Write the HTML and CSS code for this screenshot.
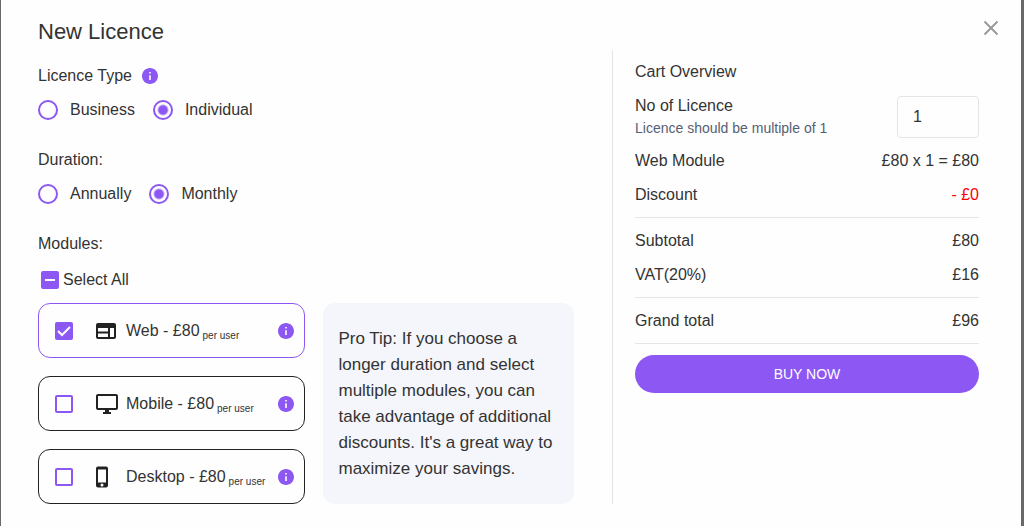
FILE: index.html
```
<!DOCTYPE html>
<html lang="en">
<head>
    <meta charset="UTF-8">
    <meta name="viewport" content="width=device-width, initial-scale=1.0">
    <title>New Licence</title>
    <link rel="stylesheet" href="styles.css">
</head>
<body>
    <svg class="sprite" aria-hidden="true">
        <symbol id="icon-info" viewBox="2 2 20 20">
            <path d="M12 2C6.480 2 2 6.480 2 12s4.480 10 10 10 10-4.480 10-10S17.520 2 12 2zm1 15h-2v-6h2v6zm0-8h-2V7h2v2z"/>
        </symbol>
    </svg>
    <form class="modal">
        <header class="modal-header">
            <h1>New Licence</h1>
            <button type="button" class="close" aria-label="Close">
                <svg viewBox="0 0 16 16"><path d="M1.500 1.500l13 13M14.500 1.500l-13 13" fill="none" stroke="currentColor" stroke-width="2"/></svg>
            </button>
        </header>
        <div class="modal-body">
            <main class="options">
                <div class="group" role="radiogroup" aria-labelledby="typeLabel">
                    <div class="group-title">
                        <span id="typeLabel">Licence Type</span>
                        <button type="button" class="info" aria-label="About licence types"><svg><use href="#icon-info"/></svg></button>
                    </div>
                    <div class="radios">
                        <label><input type="radio" name="type" value="business">Business</label>
                        <label><input type="radio" name="type" value="individual" checked>Individual</label>
                    </div>
                </div>
                <div class="group" role="radiogroup" aria-labelledby="durationLabel">
                    <div class="group-title" id="durationLabel">Duration:</div>
                    <div class="radios">
                        <label><input type="radio" name="duration" value="annually">Annually</label>
                        <label><input type="radio" name="duration" value="monthly" checked>Monthly</label>
                    </div>
                </div>
                <div class="group-title">Modules:</div>
                <label class="select-all"><input type="checkbox" id="selectAll" class="partial">Select All</label>
                <div class="modules">
                    <div class="module-list">
                        <div class="module selected">
                            <input type="checkbox" id="web" checked>
                            <label for="web">
                                <svg viewBox="0 0 24 24"><path fill-rule="evenodd" d="M4 4h16a2 2 0 0 1 2 2v12a2 2 0 0 1-2 2H4a2 2 0 0 1-2-2V6a2 2 0 0 1 2-2zM4 9v3.500h10V9zM4 14.500V18h10v-3.500zM16 9v9h4V9z"/></svg>
                                <span>Web - £80<small>per user</small></span>
                            </label>
                            <button type="button" class="info" aria-label="About Web"><svg><use href="#icon-info"/></svg></button>
                        </div>
                        <div class="module">
                            <input type="checkbox" id="mobile">
                            <label for="mobile">
                                <svg viewBox="-1 0 24 24"><path d="M21 2H3c-1.100 0-2 .9-2 2v12c0 1.100.9 2 2 2h7v2H8v2h8v-2h-2v-2h7c1.100 0 2-.9 2-2V4c0-1.100-.9-2-2-2zm0 14H3V4h18v12z"/></svg>
                                <span>Mobile - £80<small>per user</small></span>
                            </label>
                            <button type="button" class="info" aria-label="About Mobile"><svg><use href="#icon-info"/></svg></button>
                        </div>
                        <div class="module">
                            <input type="checkbox" id="desktop">
                            <label for="desktop">
                                <svg viewBox="0 0 24 24"><path fill-rule="evenodd" d="M4 1.500h8a2 2 0 0 1 2 2v17a2 2 0 0 1-2 2H4a2 2 0 0 1-2-2v-17a2 2 0 0 1 2-2zM4 4.500v13h8v-13zM8 18.500a1.500 1.500 0 1 0 0 3 1.500 1.500 0 0 0 0-3z"/></svg>
                                <span>Desktop - £80<small>per user</small></span>
                            </label>
                            <button type="button" class="info" aria-label="About Desktop"><svg><use href="#icon-info"/></svg></button>
                        </div>
                    </div>
                    <p class="tip">Pro Tip: If you choose a longer duration and select multiple modules, you can take advantage of additional discounts. It's a great way to maximize your savings.</p>
                </div>
            </main>
            <aside class="cart">
                <section class="cart-section">
                    <h2>Cart Overview</h2>
                    <div class="row">
                        <div>
                            <label for="quantity">No of Licence</label>
                            <div class="hint" id="quantityHint">Licence should be multiple of 1</div>
                        </div>
                        <input type="text" id="quantity" inputmode="numeric" value="1" aria-describedby="quantityHint">
                    </div>
                    <div class="row"><span>Web Module</span><span>£80 x 1 = £80</span></div>
                    <div class="row"><span>Discount</span><span class="discount">- £0</span></div>
                </section>
                <section class="cart-section">
                    <div class="row"><span>Subtotal</span><span>£80</span></div>
                    <div class="row"><span>VAT(20%)</span><span>£16</span></div>
                </section>
                <section class="cart-section">
                    <div class="row"><span>Grand total</span><span>£96</span></div>
                </section>
                <button type="submit" class="buy">BUY NOW</button>
            </aside>
        </div>
    </form>
    <script>
        document.getElementById('selectAll').indeterminate = true;
    </script>
</body>
</html>
```
FILE: styles.css
```
* {
    box-sizing: border-box;
}
body {
    margin: 0;
    padding: 0 3px 0 1px;
    background-color: #68696c;
    color: #333;
    font-family: "Liberation Sans", Arial, sans-serif;
    font-size: 16px;
    line-height: 24px;
}
.sprite {
    position: absolute;
    width: 0;
    height: 0;
}
.modal {
    min-height: 100vh;
    background-color: #fefefe;
}
.modal-header {
    display: flex;
    justify-content: space-between;
    align-items: flex-start;
    padding: 20px 22px 6px 37px;
}
h1 {
    margin: 0;
    font-size: 22px;
    font-weight: normal;
}
h2 {
    margin: 0;
    font-size: 16px;
    font-weight: normal;
}
button {
    padding: 0;
    border: none;
    background: none;
    font-family: inherit;
    cursor: pointer;
}
.close {
    width: 16px;
    height: 16px;
    color: #999;
}
.close svg,
.info svg {
    display: block;
    width: 16px;
    height: 16px;
}
.info svg {
    fill: #8c57f3;
}
.modal-body {
    display: grid;
    grid-template-columns: 574fr 367fr;
    padding: 0 42px 21px 37px;
}
.options {
    padding: 14px 38px 0 0;
}
.group {
    margin-bottom: 28px;
}
.group-title {
    display: flex;
    align-items: center;
    gap: 10px;
    margin-bottom: 12px;
}
.radios {
    display: flex;
    gap: 18px;
}
.radios label {
    display: flex;
    align-items: center;
    gap: 12px;
    line-height: 20px;
}
input[type="radio"],
input[type="checkbox"] {
    flex: none;
    appearance: none;
    margin: 0;
    border: 2px solid #8c57f3;
}
input[type="radio"] {
    width: 20px;
    height: 20px;
    border-radius: 50%;
}
input[type="radio"]:checked {
    background: radial-gradient(circle, #8c57f3 4px, transparent 6px);
}
input[type="checkbox"] {
    width: 18px;
    height: 18px;
    border-radius: 2px;
}
input[type="checkbox"]:checked {
    background: #8c57f3 url("data:image/svg+xml,%3Csvg xmlns='http://www.w3.org/2000/svg' viewBox='0 0 14 14'%3E%3Cpath d='M1 7l4 4 8-8' fill='none' stroke='white' stroke-width='2'/%3E%3C/svg%3E") center / 14px no-repeat;
}
.partial {
    background: linear-gradient(white, white) center / 10px 2px no-repeat #8c57f3;
}
.select-all {
    display: flex;
    align-items: center;
    gap: 4px;
    margin-bottom: 11px;
    padding-left: 3px;
}
.modules {
    display: grid;
    grid-template-columns: 268fr 251fr;
    gap: 18px;
}
.module-list {
    display: flex;
    flex-direction: column;
    gap: 18px;
}
.module {
    display: flex;
    align-items: center;
    min-height: 55px;
    padding: 0 10px 0 16px;
    border: 1px solid #222;
    border-radius: 12px;
}
.module.selected {
    border-color: #8c57f3;
}
.module label {
    flex: 1;
    display: flex;
    align-items: center;
    gap: 8px;
    margin-left: 21px;
}
.module label svg {
    flex: none;
    width: 24px;
    height: 24px;
    fill: #222;
}
.module small {
    position: relative;
    top: 3px;
    margin-left: 3px;
    font-size: 10px;
    line-height: 12px;
}
.tip {
    display: flex;
    align-items: center;
    margin: 0;
    padding: 12px 8px 12px 15px;
    border-radius: 12px;
    background-color: #f5f6fb;
    font-size: 17px;
    line-height: 26px;
}
.cart {
    padding: 0 0 0 22px;
    border-left: 1px solid #e5e5e5;
}
.cart-section {
    display: flex;
    flex-direction: column;
    gap: 10px;
    padding: 11px 0 10px;
    border-bottom: 1px solid #e5e5e5;
}
.cart-section:first-child {
    padding-top: 10px;
}
.row {
    display: flex;
    justify-content: space-between;
    align-items: center;
}
.hint {
    color: #566074;
    font-size: 14px;
    line-height: 21px;
}
.discount {
    color: #f00;
}
#quantity {
    width: 82px;
    height: 42px;
    padding: 0 15px;
    border: 1px solid #e5e5e5;
    border-radius: 4px;
    background: none;
    color: inherit;
    font: inherit;
}
.buy {
    width: 100%;
    height: 38px;
    margin-top: 11px;
    border-radius: 19px;
    background-color: #8c57f3;
    color: white;
    font-size: 14px;
}
```
